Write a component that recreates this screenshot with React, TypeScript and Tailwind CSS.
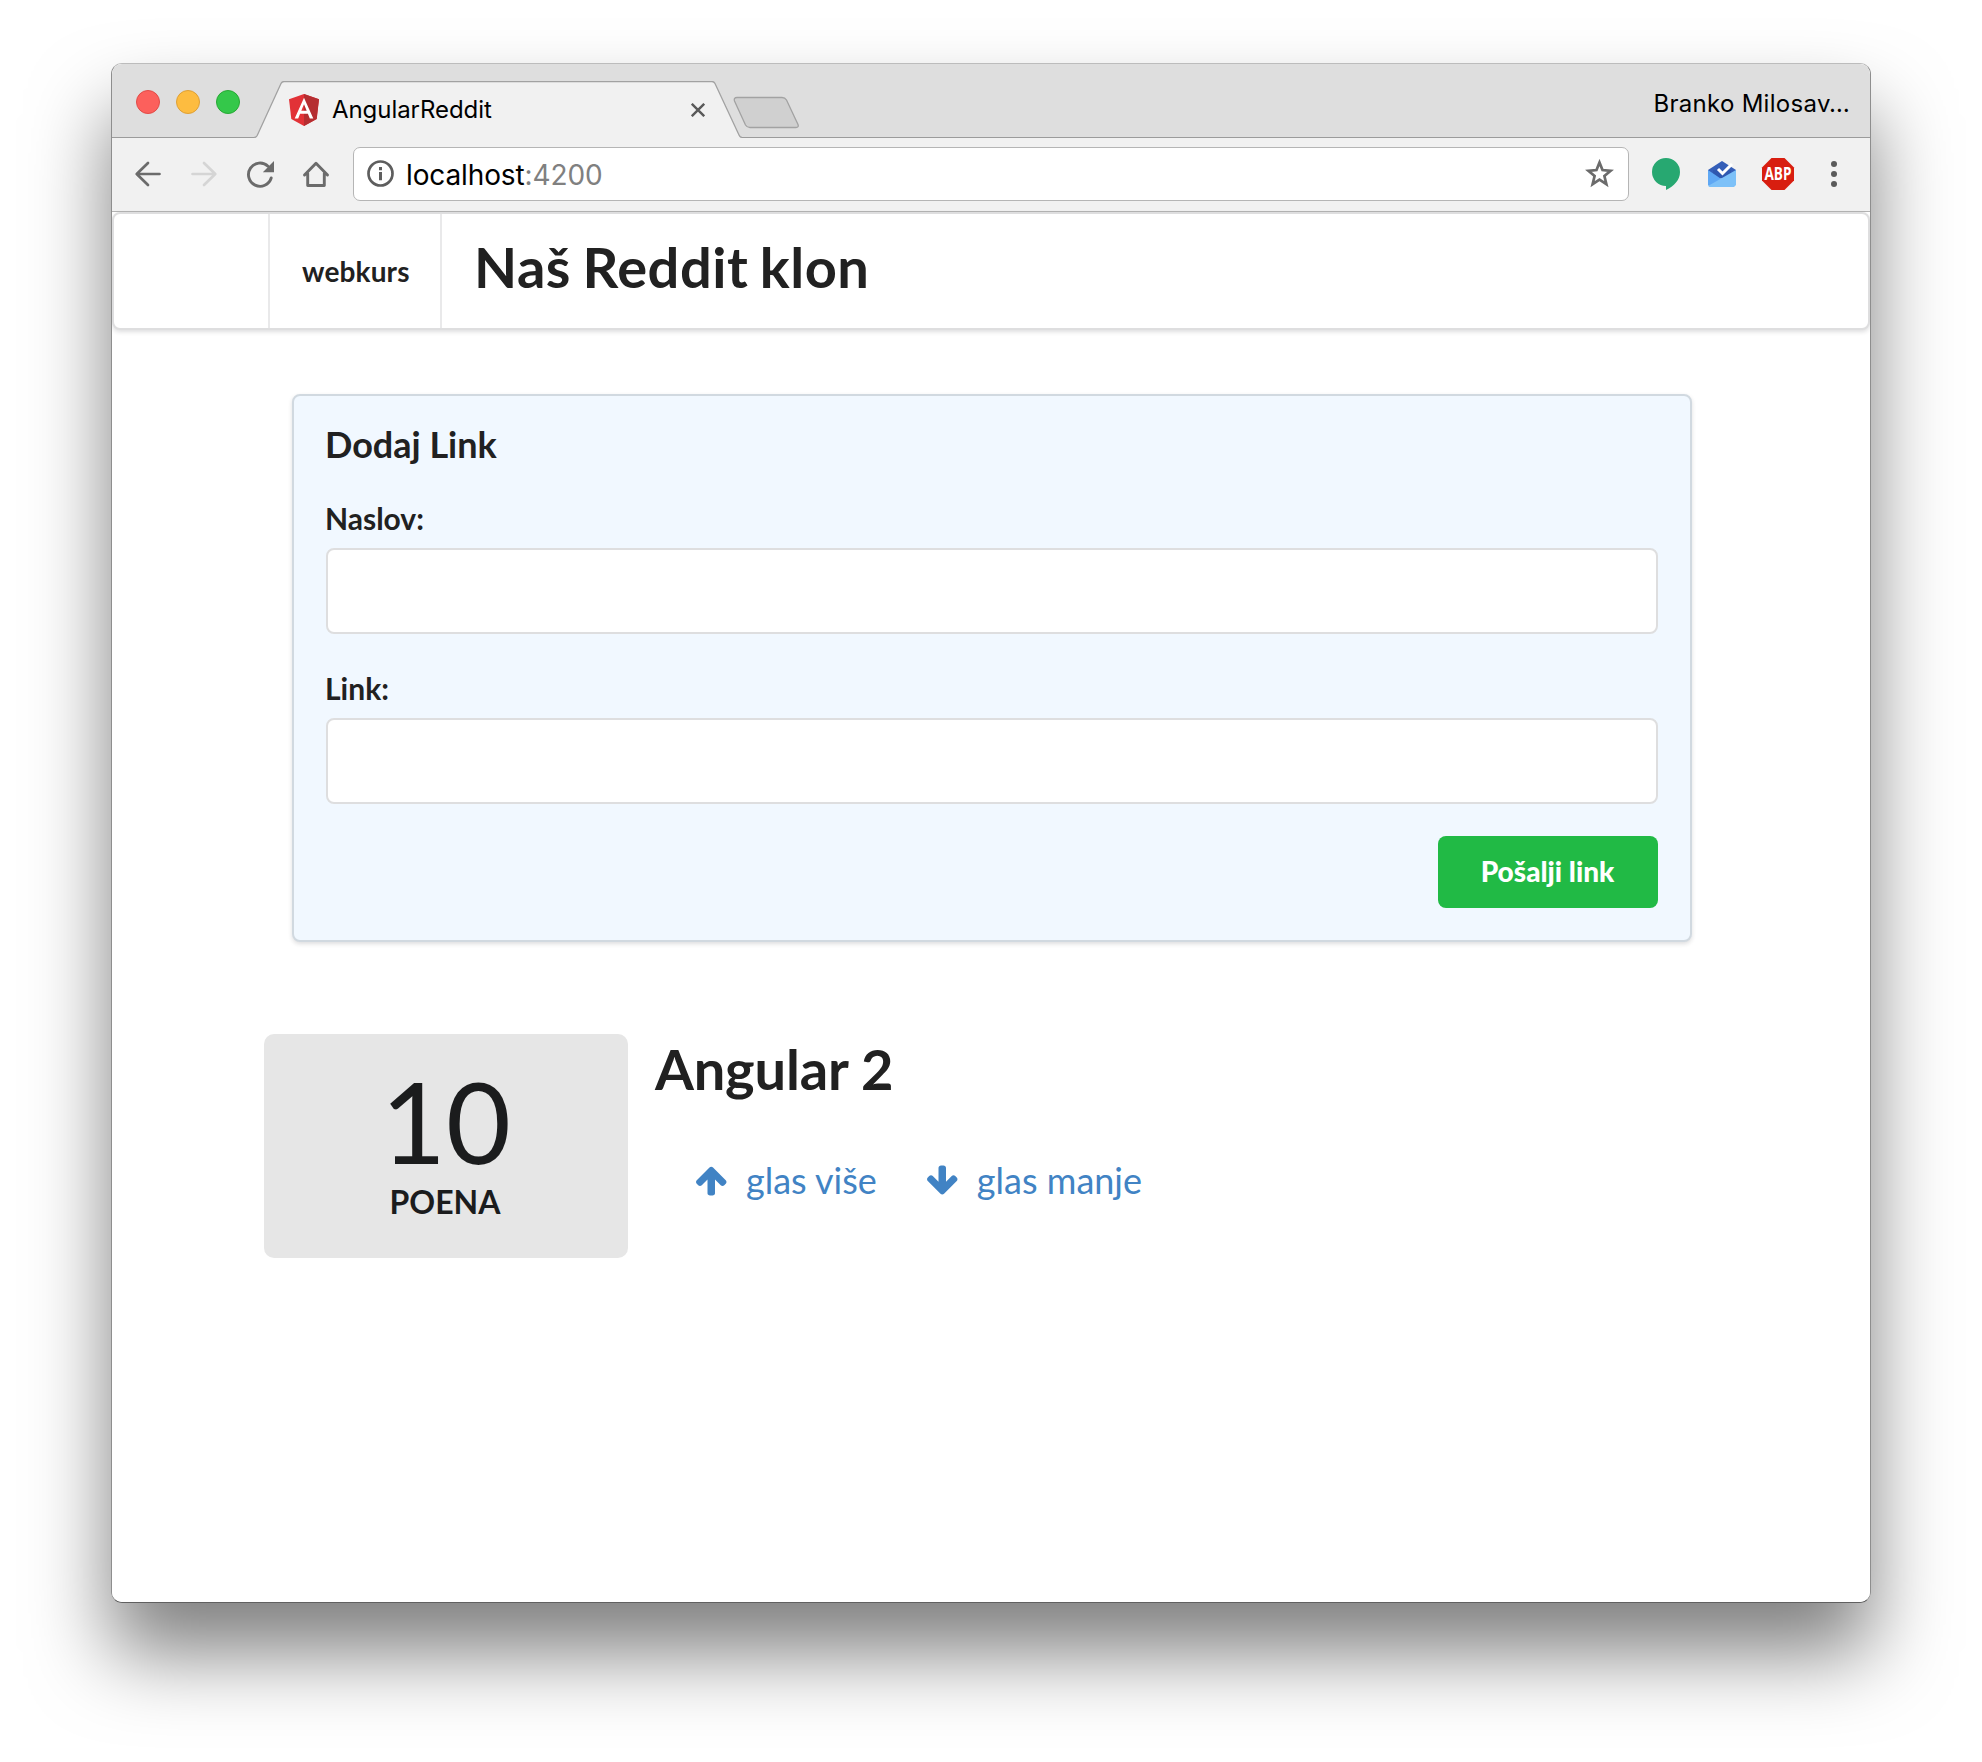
import React from "react";

const ui = "font-['Inter',sans-serif]";

function TrafficLights() {
  return (
    <div className="ml-6 mt-[26px] flex h-6 gap-4">
      <span className="size-6 rounded-full border border-[#e24b47] bg-[#fc605c]" />
      <span className="size-6 rounded-full border border-[#dfa035] bg-[#fdbc40]" />
      <span className="size-6 rounded-full border border-[#27a934] bg-[#34c84a]" />
    </div>
  );
}

function AngularLogo() {
  return (
    <svg className="mt-[13px] h-8 w-[30px]" viewBox="0 0 30 32">
      <path d="M15 0 0 5.3 2.3 25.1 15 32l12.7-6.9L30 5.3z" fill="#e23237" />
      <path d="M15 0v32l12.7-6.9L30 5.3z" fill="#b52e31" />
      <path d="M15 3.7 5.7 24.4h3.5l1.9-4.7h7.8l1.9 4.7h3.5zm0 6.6 2.7 6.4h-5.4z" fill="#fff" />
    </svg>
  );
}

function TabStrip() {
  return (
    <div className="flex h-[74px] border-b border-[#9b9b9b] bg-[#dedede]">
      <TrafficLights />
      <div className="relative ml-[14px] mt-[17px] flex h-[57px] w-[488px] pl-[35px]">
        <svg className="absolute left-0 top-0" width="488" height="57" viewBox="0 0 488 57">
          <path d="M0 57 1.5 56.5Q2.5 56 3.2 54.5L27 2.5Q28 .5 30 .5H458Q460 .5 461 2.5L485 54Q486 56.5 488 56.5V57z" fill="#f1f1f1" />
          <path d="M0 56.5Q2 56.5 3.2 54.5L27 2.5Q28 .5 30 .5H458Q460 .5 461 2.5L485 54Q486 56.5 488 56.5" fill="none" stroke="#a2a2a2" strokeWidth="1.3" />
        </svg>
        <div className="relative flex w-full">
          <AngularLogo />
          <span className={`${ui} ml-[13px] mt-[13px] text-[24px] leading-[32px] tracking-[-0.06px] text-black`}>AngularReddit</span>
          <svg className="ml-auto mr-[37px] mt-[22px]" width="14" height="14" viewBox="0 0 14 14" stroke="#5a5a5a" strokeWidth="2.4">
            <path d="m.8.8 12.4 12.4M13.2.8.8 13.2" />
          </svg>
        </div>
      </div>
      <svg className="-ml-[9px] mt-[32px]" width="67" height="34" viewBox="0 0 67 34">
        <path d="M4 1.5H49Q52 1.5 53.5 4L65 28.5Q66 31.5 63 31.5H17Q14 31.5 12.5 29L1.5 5Q.5 1.5 4 1.5z" fill="#d0d0d0" stroke="#a2a2a2" strokeWidth="1.3" />
      </svg>
      <span className={`${ui} ml-auto mr-[20px] mt-[24px] text-[24px] leading-[32px] tracking-[0.3px] text-black`}>Branko Milosav…</span>
    </div>
  );
}

function Toolbar() {
  return (
    <div className="flex h-[74px] items-center border-b border-[#b4b4b4] bg-[#f1f1f1] pb-[2px] pl-[22px]">
      <svg width="28" height="28" viewBox="0 0 28 28" fill="none" stroke="#6b6b6b" strokeWidth="2.7" strokeLinecap="round" strokeLinejoin="round">
        <path d="M25.5 14H3M14 3 2.7 14 14 25" />
      </svg>
      <svg className="ml-7" width="28" height="28" viewBox="0 0 28 28" fill="none" stroke="#d5d5d5" strokeWidth="2.7" strokeLinecap="round" strokeLinejoin="round">
        <path d="M2.5 14H25M14 3l11.3 11L14 25" />
      </svg>
      <svg className="ml-7" width="28" height="28" viewBox="0 0 28 28">
        <path d="M25.2 18A11.6 11.6 0 1 1 22 6.2" fill="none" stroke="#6b6b6b" strokeWidth="2.9" strokeLinecap="round" />
        <path d="M28 1v11.2H16.8z" fill="#6b6b6b" />
      </svg>
      <svg className="ml-7" width="28" height="28" viewBox="0 0 28 28" fill="none" stroke="#6b6b6b" strokeWidth="2.9" strokeLinejoin="round" strokeLinecap="round">
        <path d="M2.5 15 14 3.2 25.5 15M5.7 13.5v12h16.6v-12" />
      </svg>
      <div className="ml-[23px] flex h-[54px] w-[1276px] items-center rounded-[7px] border border-[#b5b5b5] bg-white pl-[13px] pr-[14px]">
        <svg width="27" height="27" viewBox="0 0 27 27">
          <circle cx="13.5" cy="13.5" r="12" fill="none" stroke="#5e5e5e" strokeWidth="2.7" />
          <path d="M12 7h3v3.2h-3zM12 12h3v8.2h-3z" fill="#5e5e5e" />
        </svg>
        <span className={`${ui} ml-[12px] mt-[2px] text-[28px] leading-[40px] tracking-[-0.12px] text-black`}>
          localhost<span className="text-[#808080]">:4200</span>
        </span>
        <svg className="ml-auto" width="29" height="29" viewBox="0 0 29 29" fill="none" stroke="#6b6b6b" strokeWidth="2.7">
          <path d="m14.5 3.5 3 7.6 8.1.7-6.2 5.2 2 8.2-6.9-4.5-6.9 4.5 2-8.2-6.2-5.2 8.1-.7z" />
        </svg>
      </div>
      <svg className="ml-[23px]" width="28" height="32" viewBox="0 0 28 32">
        <path d="M14 0a14 14 0 0 1 14 14c0 8-6 14-14 18v-4A14 14 0 0 1 14 0z" fill="#27a871" />
      </svg>
      <svg className="ml-[28px]" width="28" height="26" viewBox="0 0 28 26">
        <path d="M0 9 14 0l14 9v8H0z" fill="#345eb8" />
        <path d="M5 9h18v7l-9 4-9-4z" fill="#2a52a5" opacity=".5" />
        <path d="M0 9v15l2 2h23z" fill="#5fa8f4" />
        <path d="M28 9v15l-2 2H2L0 25z" fill="#7dc1f8" />
        <path d="m10 8 4.5 4.5L24 3" fill="none" stroke="#fff" strokeWidth="3" />
      </svg>
      <svg className="ml-[26px] overflow-visible" width="32" height="32" viewBox="0 0 32 32">
        <path d="M9.5 0h13L32 9.5v13L22.5 32h-13L0 22.5v-13z" fill="#d81e10" />
        <text x="16" y="22.2" textAnchor="middle" textLength="27" lengthAdjust="spacingAndGlyphs" fontFamily="Open Sans" fontWeight="700" fontSize="17" fill="#fff">ABP</text>
      </svg>
      <svg className="ml-[37px]" width="6" height="26" viewBox="0 0 6 26" fill="#5a5a5a">
        <circle cx="3" cy="3" r="3" />
        <circle cx="3" cy="13" r="3" />
        <circle cx="3" cy="23" r="3" />
      </svg>
    </div>
  );
}

function NavMenu() {
  return (
    <nav className="flex h-[118px] rounded-[8px] border-2 border-[#dededf] bg-white shadow-[0_2px_4px_0_rgba(34,36,38,0.15)]">
      <div className="w-[154px]" />
      <div className="w-[174px] border-x-2 border-[#e9e9ea] pl-8 pt-[37px] text-[28px] font-bold leading-[40px] tracking-[0.15px]">webkurs</div>
      <h1 className="ml-[32px] mt-[17px] text-[56px] font-bold leading-[72px] tracking-[0.5px] [word-spacing:-2.5px]">Naš Reddit klon</h1>
    </nav>
  );
}

function Field({ label }: { label: string }) {
  return (
    <label className="block">
      <span className="-ml-px block text-[30px] font-bold leading-[40px]">{label}</span>
      <input className="mt-[10px] block h-[86px] w-full rounded-[8px] border-2 border-[#dededf] bg-white px-7 outline-none" />
    </label>
  );
}

function AddLinkForm() {
  return (
    <form className="ml-[180px] mt-[64px] h-[548px] w-[1400px] rounded-[8px] border-2 border-[#d1d9e0] bg-[#f1f8ff] px-8 pt-[26px] shadow-[0_2px_4px_0_rgba(34,36,38,0.15)]">
      <h3 className="-ml-px text-[36px] font-bold leading-[44px]">Dodaj Link</h3>
      <div className="mt-[32px] flex flex-col gap-[34px]">
        <Field label="Naslov:" />
        <Field label="Link:" />
      </div>
      <div className="mt-8 flex justify-end">
        <button type="button" className="h-[72px] w-[220px] rounded-[8px] bg-[#21ba45] pb-[2px] pr-px text-[28px] font-black leading-[28px] text-white">
          Pošalji link
        </button>
      </div>
    </form>
  );
}

const upPath =
  "M1611 971q0 51-37 90l-75 75q-38 38-91 38-54 0-90-38l-294-293v704q0 52-37.5 84.5t-90.5 32.5h-128q-53 0-90.5-32.5t-37.5-84.5v-704l-294 293q-36 38-90 38t-90-38l-75-75q-38-38-38-90 0-53 38-91l651-651q35-37 90-37 54 0 91 37l651 651q37 39 37 91z";
const downPath =
  "M1611 832q0 53-37 90l-651 652q-39 37-91 37-53 0-90-37l-651-652q-38-36-38-90 0-53 38-91l74-75q39-37 91-37 53 0 90 37l294 294v-704q0-52 38-90t90-38h128q52 0 90 38t38 90v704l294-294q37-37 90-37 52 0 91 37l75 75q37 39 37 91z";

function VoteLink({ d, text }: { d: string; text: string }) {
  return (
    <a className="flex items-center gap-[16px] text-[36px] leading-[44px] text-[#4183c4]">
      <svg width="35" height="35" viewBox="0 0 1792 1792" fill="currentColor">
        <path d={d} />
      </svg>
      {text}
    </a>
  );
}

function Article() {
  return (
    <article className="ml-[152px] mt-[92px] flex">
      <div className="h-[224px] w-[364px] rounded-[10px] bg-[#e6e6e6] text-[#1b1c1d]">
        <div className="mt-[31px] text-center text-[112px] leading-[112px]">10</div>
        <div className="mt-[5px] pr-[2px] text-center text-[32px] font-bold leading-[40px]">POENA</div>
      </div>
      <div className="ml-[27px]">
        <h2 className="-mt-px text-[56px] font-bold leading-[72px] tracking-[-0.15px]">Angular 2</h2>
        <div className="ml-[40px] mt-[53px] flex gap-[49px]">
          <VoteLink d={upPath} text="glas više" />
          <VoteLink d={downPath} text="glas manje" />
        </div>
      </div>
    </article>
  );
}

export default function App() {
  return (
    <div className="h-[1762px] w-[1982px] overflow-hidden bg-white pl-[111px] pt-[63px]">
      <div className="h-[1540px] w-[1760px] rounded-[11px] border border-x-[#8e8e8e] border-b-[#606060] border-t-[#bcbcbc] shadow-[0_50px_80px_0_rgba(0,0,0,0.5)]">
        <div className="h-full overflow-hidden rounded-[10px] bg-white font-['Lato',sans-serif] text-[#212121]">
          <TabStrip />
          <Toolbar />
          <NavMenu />
          <AddLinkForm />
          <Article />
        </div>
      </div>
    </div>
  );
}
